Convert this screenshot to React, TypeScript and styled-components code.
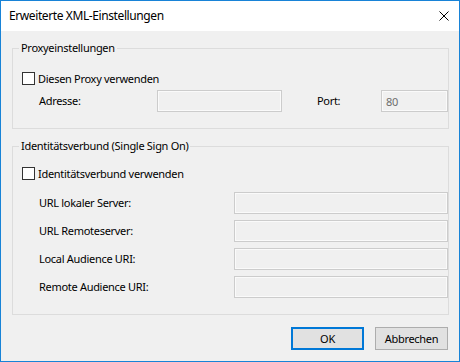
import styled, { createGlobalStyle } from "styled-components";

const GlobalStyle = createGlobalStyle`
  html, body {
    margin: 0;
    padding: 0;
    background: #ffffff;
  }
  body {
    font-family: "Noto Sans", "Open Sans", sans-serif;
    font-size: 11px;
    letter-spacing: -0.3px;
    color: #000000;
  }
`;

const ssoRows = [
  "URL lokaler Server:",
  "URL Remoteserver:",
  "Local Audience URI:",
  "Remote Audience URI:",
];

const App = () => {
  return (
    <>
      <GlobalStyle />
      <Window>
        <TitleBar>
          <Title>Erweiterte XML-Einstellungen</Title>
          <CloseIcon width="10" height="10" viewBox="0 0 10 10">
            <path d="M0.5 0.5 L9.5 9.5 M9.5 0.5 L0.5 9.5" stroke="#000" strokeWidth="1" />
          </CloseIcon>
        </TitleBar>

        <Body>
          <Group $top={9}>
            <Legend>Proxyeinstellungen</Legend>
            <GroupInner $padTop={15} $padBottom={16}>
              <CheckRow>
                <CheckBox />
                <span>Diesen Proxy verwenden</span>
              </CheckRow>
              <ProxyRow>
                <FieldLabel>Adresse:</FieldLabel>
                <TextBox />
                <PortLabel>Port:</PortLabel>
                <TextBox>
                  <Placeholder>80</Placeholder>
                </TextBox>
              </ProxyRow>
            </GroupInner>
          </Group>

          <Group $top={9}>
            <Legend>Identitätsverbund (Single Sign On)</Legend>
            <GroupInner $padTop={12} $padBottom={16}>
              <CheckRow>
                <CheckBox />
                <span>Identitätsverbund verwenden</span>
              </CheckRow>
              <SsoList>
                {ssoRows.map((label) => (
                  <SsoRow key={label}>
                    <FieldLabel>{label}</FieldLabel>
                    <TextBox />
                  </SsoRow>
                ))}
              </SsoList>
            </GroupInner>
          </Group>

          <ButtonBar>
            <Button type="button" $primary>
              OK
            </Button>
            <Button type="button">Abbrechen</Button>
          </ButtonBar>
        </Body>
      </Window>
    </>
  );
};
export default App;

const Window = styled.div`
  width: 460px;
  height: 362px;
  box-sizing: border-box;
  border: 1px solid #1883d7;
  display: flex;
  flex-direction: column;
  background: #f0f0f0;
`;

const TitleBar = styled.div`
  height: 30px;
  flex-shrink: 0;
  background: #ffffff;
  display: flex;
  align-items: center;
  justify-content: space-between;
  padding: 0 10px 0 8px;
`;

const Title = styled.div`
  font-size: 12px;
  letter-spacing: -0.4px;
  line-height: 16px;
`;

const CloseIcon = styled.svg`
  display: block;
  margin-top: -1px;
`;

const Body = styled.div`
  flex: 1;
  display: flex;
  flex-direction: column;
  padding: 0 10px 0 11px;
`;

const Group = styled.fieldset<{ $top: number }>`
  margin: ${({ $top }) => $top}px 0 0 0;
  padding: 0;
  min-width: 0;
  border: 1px solid #dcdcdc;
`;

const Legend = styled.legend`
  margin-left: 6px;
  padding: 0 2px;
  line-height: 16px;
`;

const GroupInner = styled.div<{ $padTop: number; $padBottom: number }>`
  padding: ${({ $padTop, $padBottom }) => `${$padTop}px 0 ${$padBottom}px 9px`};
`;

const CheckRow = styled.div`
  display: flex;
  align-items: center;
  height: 15px;
  line-height: 15px;
  gap: 3px;
`;

const CheckBox = styled.span`
  width: 13px;
  height: 13px;
  box-sizing: border-box;
  border: 1px solid #333333;
  background: #ffffff;
  flex-shrink: 0;
`;

const ProxyRow = styled.div`
  display: grid;
  grid-template-columns: 118px 125px 99px 67px;
  align-items: center;
  margin: 4px 0 0 17px;
`;

const PortLabel = styled.span`
  line-height: 16px;
  padding-left: 35px;
`;

const SsoList = styled.div`
  display: flex;
  flex-direction: column;
  gap: 6px;
  margin: 11px 0 0 17px;
`;

const SsoRow = styled.div`
  display: grid;
  grid-template-columns: 195px 214px;
  align-items: center;
`;

const FieldLabel = styled.span`
  line-height: 16px;
  white-space: nowrap;
`;

const TextBox = styled.div`
  height: 22px;
  box-sizing: border-box;
  border: 1px solid #cccccc;
  box-shadow: inset 0 0 0 1px #fafafa;
  background: #f0f0f0;
  display: flex;
  align-items: center;
  padding: 0 4px;
`;

const Placeholder = styled.span`
  color: #6d6d6d;
`;

const ButtonBar = styled.div`
  display: flex;
  justify-content: flex-end;
  gap: 11px;
  margin-top: 12px;
  padding-right: 1px;
`;

const Button = styled.button<{ $primary?: boolean }>`
  width: 73px;
  height: 23px;
  box-sizing: border-box;
  font-family: inherit;
  font-size: 11px;
  letter-spacing: -0.3px;
  color: #000000;
  background: #e1e1e1;
  border: ${({ $primary }) => ($primary ? "2px solid #0078d7" : "1px solid #adadad")};
  padding: 0;
`;
